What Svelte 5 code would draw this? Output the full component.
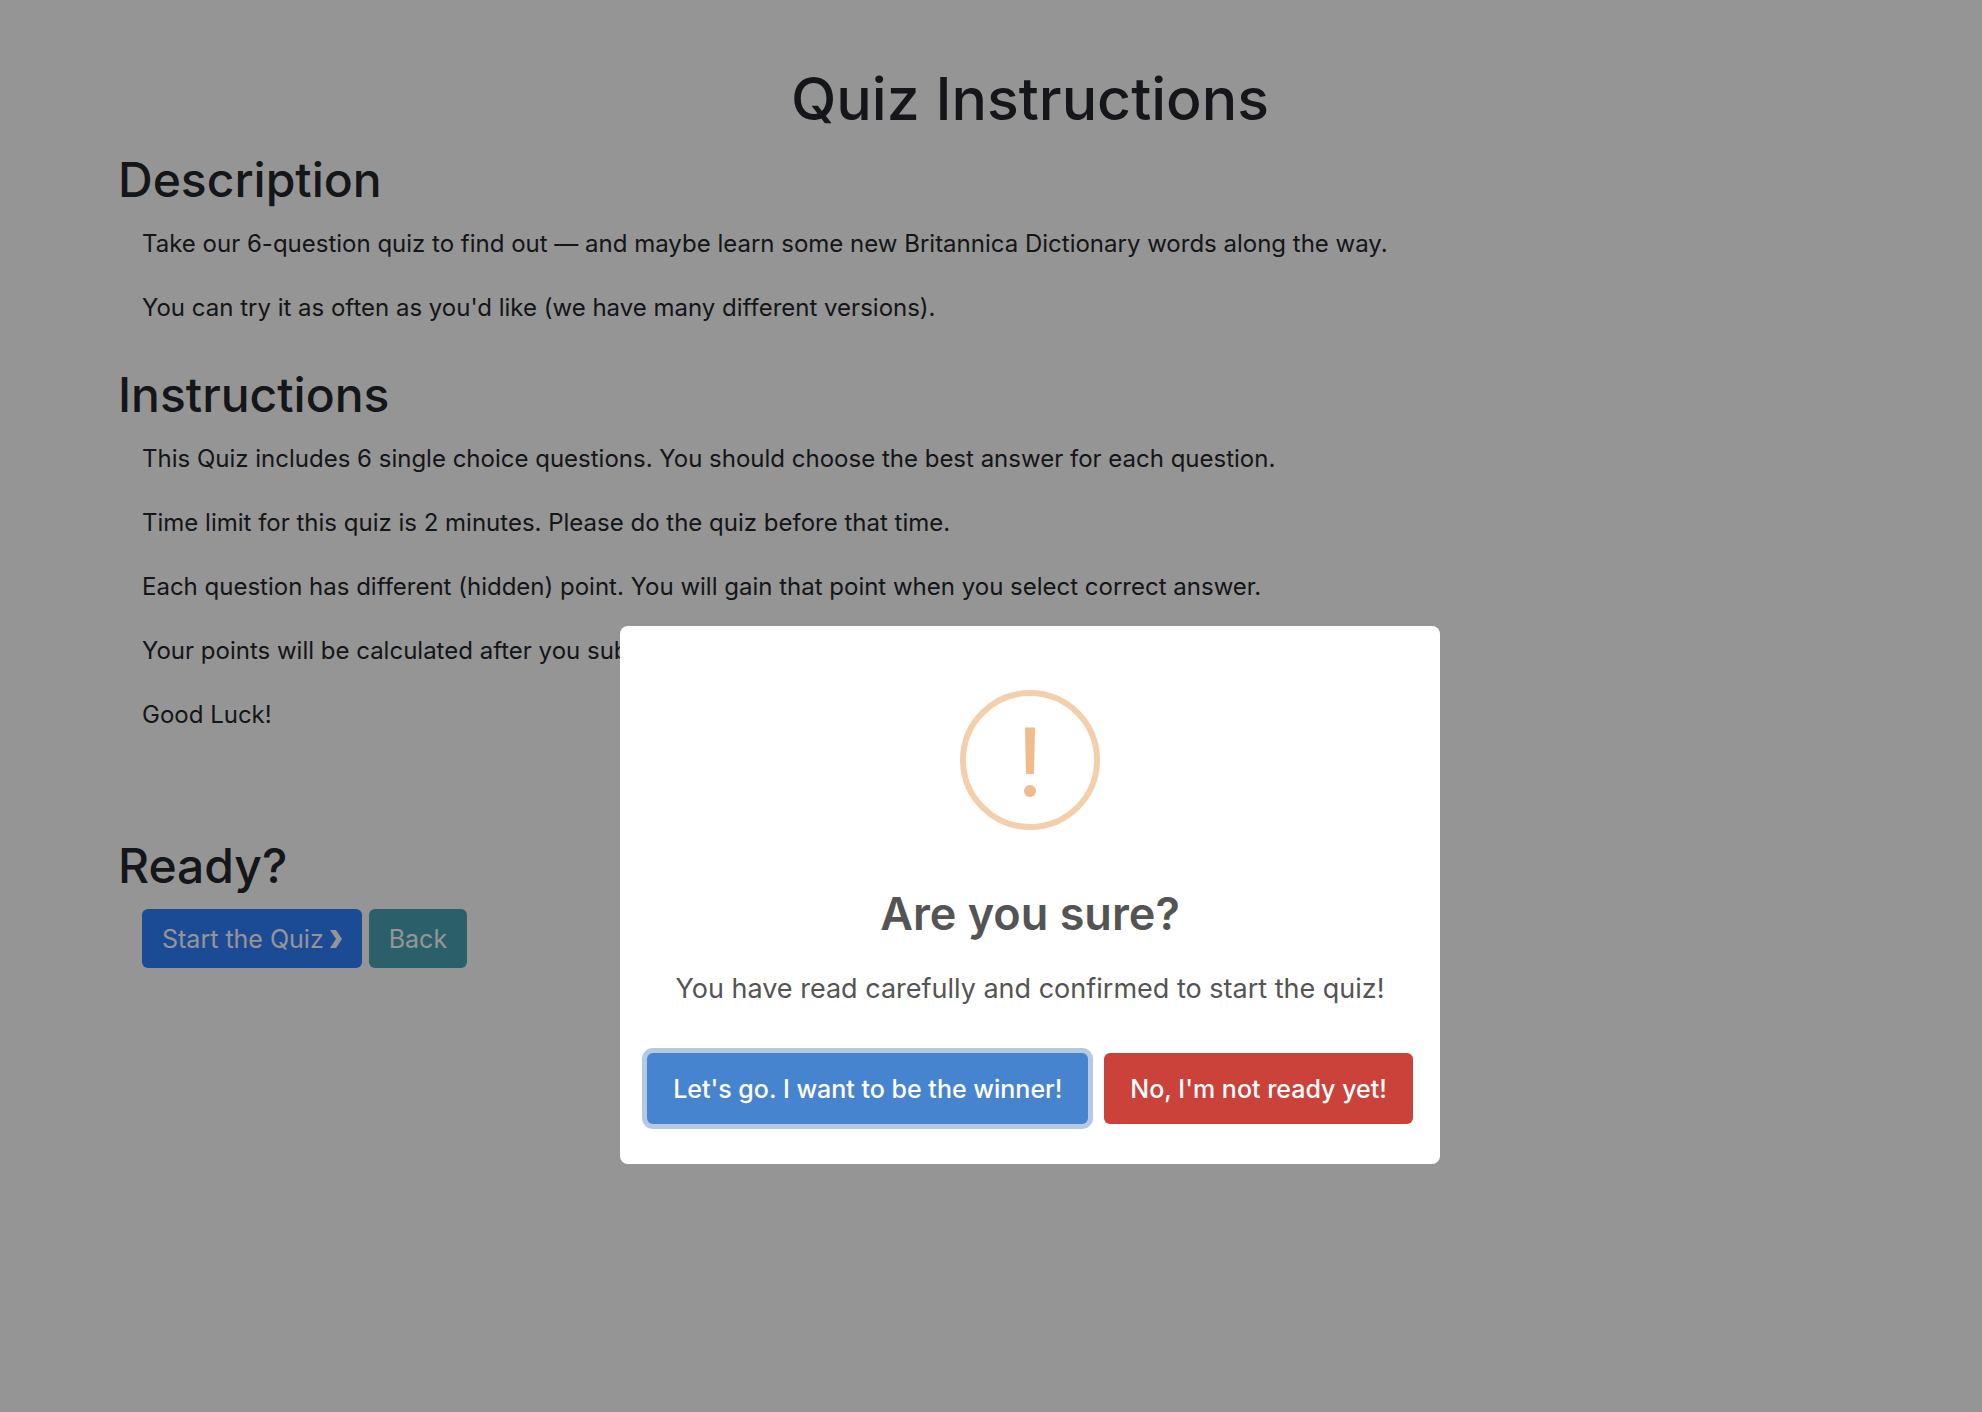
<script>
  const sections = [
    {
      title: 'Description',
      lines: [
        'Take our 6-question quiz to find out — and maybe learn some new Britannica Dictionary words along the way.',
        "You can try it as often as you'd like (we have many different versions)."
      ]
    },
    {
      title: 'Instructions',
      lines: [
        'This Quiz includes 6 single choice questions. You should choose the best answer for each question.',
        'Time limit for this quiz is 2 minutes. Please do the quiz before that time.',
        'Each question has different (hidden) point. You will gain that point when you select correct answer.',
        'Your points will be calculated after you submit.',
        'Good Luck!'
      ]
    }
  ];

  let open = $state(true);
</script>

<main class="page">
  <h1>Quiz Instructions</h1>

  {#each sections as section}
    <section class="block">
      <h2>{section.title}</h2>
      <div class="lines">
        {#each section.lines as line}
          <p>{line}</p>
        {/each}
      </div>
    </section>
  {/each}

  <section class="block ready">
    <h2>Ready?</h2>
    <div class="actions">
      <button type="button" class="btn primary" onclick={() => (open = true)}>
        Start the Quiz
        <svg viewBox="0 0 12 18" width="12" height="18" aria-hidden="true">
          <path d="M0 0H6L12 9L6 18H0L6 9Z" fill="currentColor" />
        </svg>
      </button>
      <button type="button" class="btn info">Back</button>
    </div>
  </section>
</main>

{#if open}
  <div class="overlay">
    <div class="modal" role="dialog" aria-modal="true" aria-labelledby="confirm-title">
      <svg class="icon" viewBox="0 0 140 140" width="140" height="140" aria-hidden="true">
        <circle cx="70" cy="70" r="67" fill="none" stroke="#f4cfae" stroke-width="6" />
        <path d="M65 37.500H75L74 84H66Z" fill="#f0bc8c" />
        <circle cx="70" cy="101" r="6" fill="#f0bc8c" />
      </svg>
      <h2 id="confirm-title" class="title">Are you sure?</h2>
      <p class="message">You have read carefully and confirmed to start the quiz!</p>
      <div class="choices">
        <button type="button" class="choice confirm" onclick={() => (open = false)}>Let's go. I want to be the winner!</button>
        <button type="button" class="choice deny" onclick={() => (open = false)}>No, I'm not ready yet!</button>
      </div>
    </div>
  </div>
{/if}

<style>
  :global(body) {
    margin: 0;
    background: #fff;
    color: #24272b;
    font-family: Inter, 'Liberation Sans', sans-serif;
    font-size: 24px;
    line-height: 38px;
  }

  .page {
    padding: 61px 40px 60px 118px;
  }

  h1,
  h2,
  p {
    margin: 0;
  }

  h1 {
    font-size: 59px;
    line-height: 76px;
    font-weight: 500;
    text-align: center;
  }

  h2 {
    font-size: 48px;
    line-height: 62px;
    font-weight: 500;
  }

  .block {
    margin-top: 12px;
  }

  .block + .block {
    margin-top: 37px;
  }

  .lines {
    display: grid;
    gap: 26px;
    padding: 14px 24px 0;
  }

  .block + .ready {
    margin-top: 101px;
  }

  .actions {
    display: flex;
    gap: 7px;
    padding: 12px 24px 0;
  }

  button {
    border: 0;
    color: #fff;
    font-family: inherit;
    font-size: 25px;
    line-height: 38px;
    cursor: pointer;
  }

  .btn {
    display: inline-flex;
    align-items: center;
    gap: 6px;
    padding: 11px 20px 10px;
    border-radius: 6px;
  }

  .primary {
    background: #3080ff;
  }

  .info {
    background: #4ba3b5;
  }

  .overlay {
    position: fixed;
    inset: 0;
    display: flex;
    align-items: center;
    justify-content: center;
    padding: 378px 0 0 78px;
    background: rgba(0, 0, 0, 0.415);
  }

  .modal {
    box-sizing: border-box;
    width: 820px;
    padding: 64px 20px 40px;
    border-radius: 8px;
    background: #fff;
    color: #545454;
    text-align: center;
  }

  .icon {
    display: block;
    margin: 0 auto;
  }

  .title {
    margin-top: 53px;
    font-size: 45px;
    line-height: 62px;
    font-weight: 600;
  }

  .message {
    margin-top: 22px;
    font-size: 27px;
    line-height: 44px;
  }

  .choices {
    display: flex;
    justify-content: center;
    gap: 16px;
    margin-top: 42px;
  }

  .choice {
    padding: 17px 26px 16px;
    border-radius: 6px;
    font-weight: 500;
  }

  .confirm {
    background: #4784d0;
    box-shadow: 0 0 0 5px #b5c9e3;
  }

  .deny {
    background: #cb423a;
  }
</style>
